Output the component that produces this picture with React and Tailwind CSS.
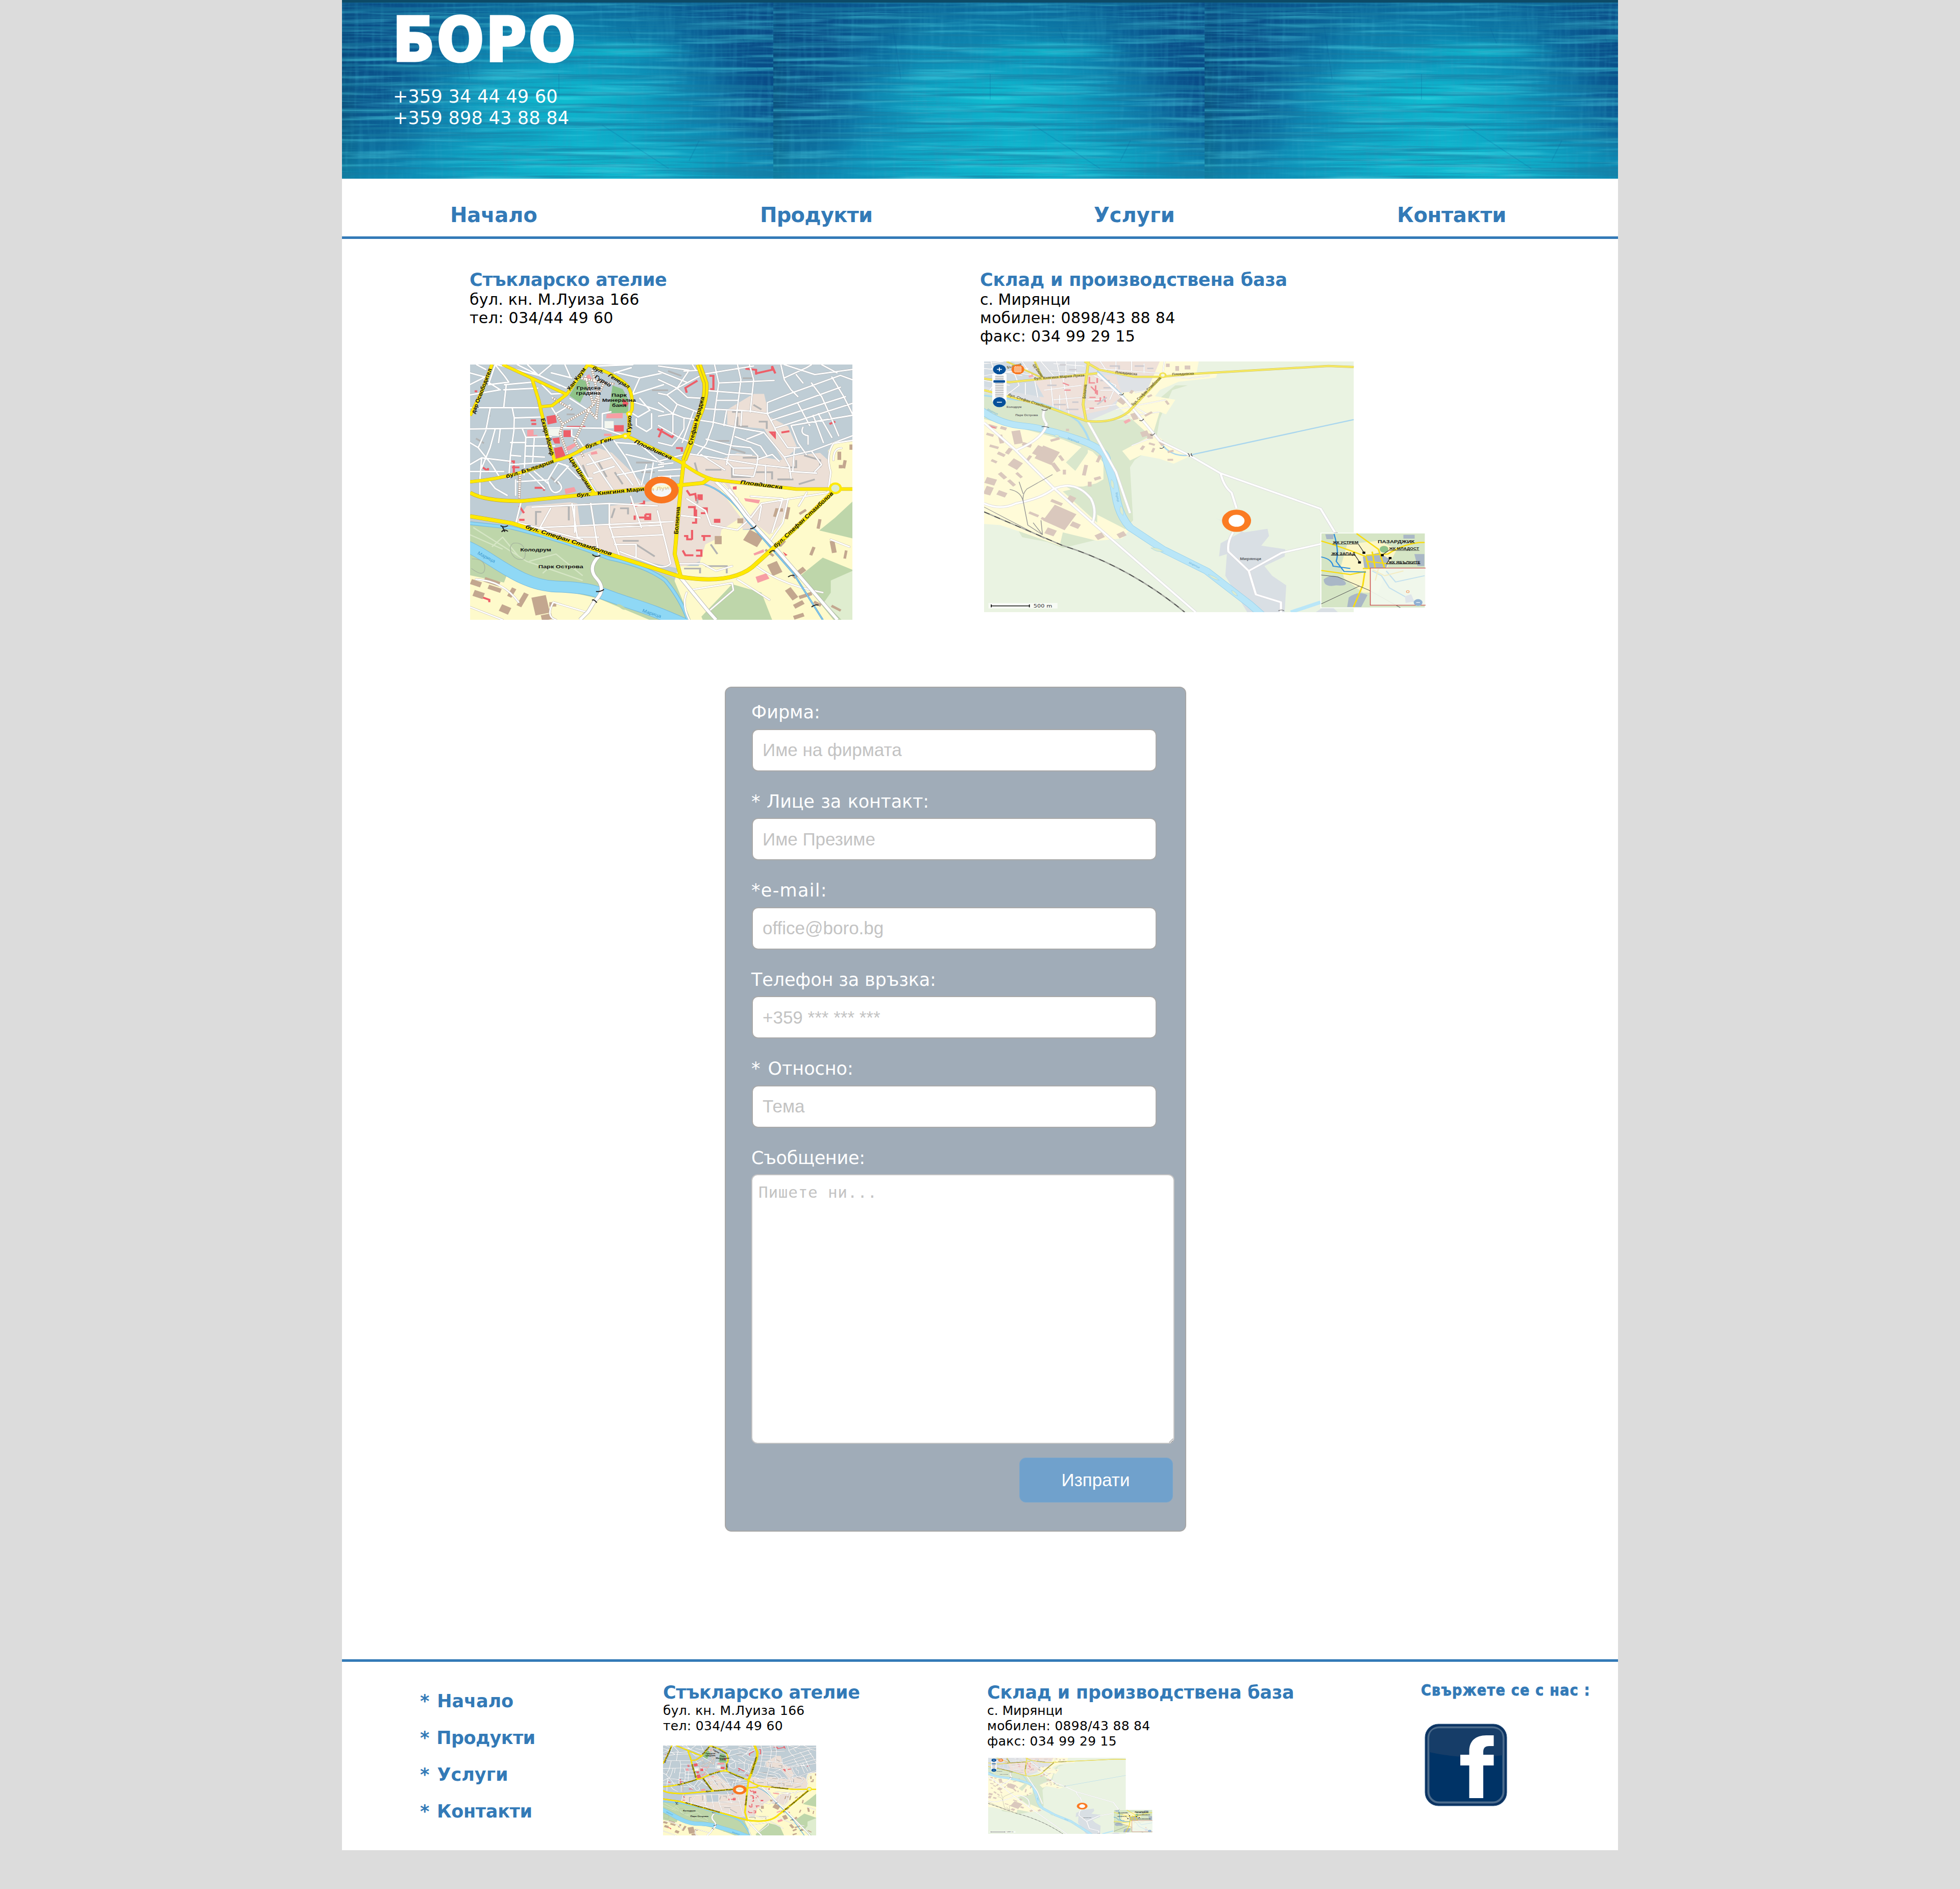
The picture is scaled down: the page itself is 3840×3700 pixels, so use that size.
import React from "react";

const NAV = ["Начало", "Продукти", "Услуги", "Контакти"];

/* One tile of the brushed fabric behind the header */
function FabricTile({ id }) {
  return (
    <svg className="block h-[345px] w-[845px] shrink-0" viewBox="0 0 845 345" preserveAspectRatio="none" aria-hidden="true">
      <defs>
        <linearGradient id={id + "x"} x1="0" x2="1" y1="0" y2="0">
          <stop offset="0" stopColor="#0b4a72" />
          <stop offset="0.05" stopColor="#0c5c90" />
          <stop offset="0.16" stopColor="#0d6ea2" />
          <stop offset="0.34" stopColor="#0f90b8" />
          <stop offset="0.55" stopColor="#0e9cc0" />
          <stop offset="0.78" stopColor="#0d80ae" />
          <stop offset="1" stopColor="#0b5390" />
        </linearGradient>
        <linearGradient id={id + "y"} x1="0" x2="0" y1="0" y2="1">
          <stop offset="0" stopColor="#0a4f88" stopOpacity="0.7" />
          <stop offset="0.3" stopColor="#0a6a9c" stopOpacity="0.25" />
          <stop offset="0.6" stopColor="#0fa8c6" stopOpacity="0.12" />
          <stop offset="1" stopColor="#0fb0cc" stopOpacity="0.5" />
        </linearGradient>
        <radialGradient id={id + "g"}>
          <stop offset="0" stopColor="#0fc8d6" stopOpacity="0.75" />
          <stop offset="1" stopColor="#0fc0d4" stopOpacity="0" />
        </radialGradient>
        <radialGradient id={id + "d"}>
          <stop offset="0" stopColor="#083f7c" stopOpacity="0.55" />
          <stop offset="1" stopColor="#083f7c" stopOpacity="0" />
        </radialGradient>
        <filter id={id + "k"} x="0" y="0" width="1" height="1">
          <feTurbulence type="fractalNoise" baseFrequency="0.0032 0.15" numOctaves="4" seed="7" />
          <feColorMatrix values="0 0 0 0 0.01  0 0 0 0 0.2  0 0 0 0 0.36  4.4 0 0 0 -1.95" />
        </filter>
        <filter id={id + "l"} x="0" y="0" width="1" height="1">
          <feTurbulence type="fractalNoise" baseFrequency="0.0045 0.12" numOctaves="4" seed="21" />
          <feColorMatrix values="0 0 0 0 0.09  0 0 0 0 0.74  0 0 0 0 0.84  0 3.2 0 0 -1.6" />
        </filter>
        <filter id={id + "w"} x="0" y="0" width="1" height="1">
          <feTurbulence type="fractalNoise" baseFrequency="0.12 0.012" numOctaves="2" seed="4" />
          <feColorMatrix values="0 0 0 0 0.03  0 0 0 0 0.35  0 0 0 0 0.55  2.4 0 0 0 -1.1" />
        </filter>
      </defs>
      <rect width="845" height="345" fill={`url(#${id}x)`} />
      <rect width="845" height="345" fill={`url(#${id}y)`} />
      <ellipse cx="90" cy="60" rx="220" ry="120" fill={`url(#${id}d)`} />
      <ellipse cx="70" cy="170" rx="120" ry="180" fill={`url(#${id}d)`} />
      <ellipse cx="800" cy="60" rx="190" ry="130" fill={`url(#${id}d)`} />
      <ellipse cx="830" cy="160" rx="110" ry="150" fill={`url(#${id}d)`} />
      <ellipse cx="530" cy="95" rx="170" ry="26" fill={`url(#${id}g)`} />
      <ellipse cx="440" cy="190" rx="280" ry="90" fill={`url(#${id}g)`} />
      <ellipse cx="500" cy="310" rx="380" ry="90" fill={`url(#${id}g)`} />
      <rect width="845" height="345" filter={`url(#${id}w)`} opacity="0.25" />
      <rect width="845" height="345" filter={`url(#${id}k)`} opacity="0.62" />
      <rect width="845" height="345" filter={`url(#${id}l)`} opacity="0.42" />
      <path d="M234 45 L250 150M560 50 L572 80M425 140 V190M510 240 L640 325M700 270 L680 310M785 70 L840 185" stroke="#0a5a94" strokeWidth="2" opacity="0.18" fill="none" />
    </svg>
  );
}

const STREETS_NW =
  "M0 130 L110 75 L130 30M40 12 L95 40M0 60 L90 85M85 100 L180 160 L0 190M150 12 L110 130 L230 115 L205 80 L150 12M205 130 L370 115M215 130 L200 265 L0 265M200 265 H410M200 160 L400 150M250 265 L262 325 L430 320M262 325 L260 400 L240 540 L230 680M0 390 L560 383 L780 386 L910 430M120 270 L95 400 L50 500 L0 470M50 500 L130 600M150 390 L120 500 L70 620M180 390 L170 470M310 390 L330 440 L480 435M330 440 L320 660M240 470 H330M240 545 L300 550M380 440 L370 590M330 490 H500M330 550 L440 555M405 75 L340 12M405 75 L480 12M405 75 L570 150M280 12 L530 135M160 12 L405 75M425 130 L480 185 L570 180M480 260 L505 300 L590 250M590 210 L690 275M560 12 L590 80M480 60 L600 90M740 20 L960 12M950 190 L1140 130M960 230 L1140 290M1000 210 L1060 280 L990 320 L960 300M980 330 V370 L1040 405 L1070 385 V300M780 390 V300 L830 290M850 60 L950 30M870 60 L1000 90 L1140 60M1000 90 L960 180M600 395 V430 L640 450 L680 510M0 600 L70 560 L240 580M70 560 L60 690M130 600 L180 680M0 640 H200M240 600 L470 585M280 700 L460 690 L520 590 L580 610 L500 700M560 600 L640 680 H720M460 700 Q480 780 520 760 T520 700M350 650 L440 740M380 640 L460 710M270 690 V780M60 690 V780M110 690 L150 740 L220 780M700 540 L850 760M780 480 L960 720M690 600 L830 560M730 650 L850 610M620 560 L740 760M850 460 L920 560 L1000 720M920 540 L1140 590M860 470 L1000 480 L1140 600M1040 600 L1010 720M1080 590 L1060 700M1140 610 L870 660";

const STREETS_NE =
  "M150 50 L240 45M0 20 L180 45 L110 150 L0 100M240 80 L110 150 L170 205 L265 210M0 50 L165 115M0 180 L50 190 L110 150M50 190 L110 245 L85 300 L0 315M110 245 L230 290M85 300 V410M0 235 L85 300 L150 325 L320 350 L450 380 L620 410M0 370 L120 440 L80 490 L0 470M150 330 V390 L120 440 L240 490M205 290 L140 470M330 12 L355 120 L320 370 L280 480 L230 540M465 12 L485 100 L450 380 L400 600M535 12 L560 100 L540 290M355 120 L680 105M290 165 L550 185M345 222 H470M250 270 L540 285 L640 300 L685 385M490 290 L485 370M400 285 L385 370M250 70 L560 20M200 12 L220 45M640 300 V235 L780 180 L1070 75 L1140 100M780 160 L740 100 L720 12M740 90 L870 30 L900 12M810 70 L850 120M780 160 L820 200M740 12 L920 70M920 70 L1140 40M960 12 L1050 60M640 300 L1070 145M660 340 L1100 200M685 385 L1140 240M780 370 L1140 310M820 240 L890 370M900 120 L960 200 L1010 310 L1060 430M1020 85 L1090 200 L1140 300M940 300 L1020 440M910 310 L970 470M900 520 L1140 430M780 370 L820 470 L870 540M620 410 L740 555 L900 520M850 380 Q830 420 880 430 V480M685 390 L760 500 H830M740 555 L770 610 L780 680M620 410 L520 450M450 435 L600 490 L640 550M450 380 L560 400M280 450 L440 490 L540 500 L585 550 L580 600M240 490 L400 540 L550 545M170 535 L400 570 L580 600 L770 620M580 570 L670 540 L710 580M250 540 L390 630M400 580 L440 620 V660 L560 670 L580 600M440 620 H560M630 605 V710M770 640 L930 650M800 500 L790 640M900 520 L960 600 L920 640M0 580 L150 540M0 600 L85 590M0 635 L150 625M0 670 L140 665M70 665 V700";

const STREETS_S =
  "M270 1020 L250 1110M310 1045 L600 1030 L780 1040M380 1050 L340 1130 L840 1105M470 1040 V1150M530 1030 L560 1240M600 1030 V1120 L640 1255M600 1130 L790 1120M610 1170 L800 1160M680 1000 L720 1130M780 1060 L830 1280 Q810 1300 780 1290 L640 1230M460 1030 L480 1170 H560M260 1110 L500 1180M620 1200 H700 V1255M890 1010 L960 1060 L980 1120 L1080 1140 L1130 1090M870 1080 L940 1090M1050 970 L1130 1090 L1170 1030 L1420 985M1130 1000 L1250 1010 L1210 1150M1170 1040 L1160 1100M1270 1010 L1250 1110 L1200 1190M1340 985 L1310 1040M860 1280 H950 L1000 1310 L1060 1290M900 1390 L1060 1360 L1065 1390 L970 1480M1080 1345 L1200 1430M1150 1290 Q1250 1370 1400 1400M1430 1180 L1500 1210M1420 980 L1430 900 Q1410 830 1440 780 L1511 768M1440 850 Q1440 800 1470 800M510 1480 L390 1440 Q360 1500 400 1513M78 1460 L200 1513M100 1345 Q200 1350 260 1440M890 1400 Q870 1450 900 1513M1000 930 L1080 1010";

const GREY_BUILDINGS =
  "M345 1065h-20v55M420 1040h28v60M620 1050l-12 40M640 1050h30v25M700 1200l70 50M650 1185h60M920 860l10 40M960 890h60M1060 880v40h70M1150 900h60v30M1230 880h70v-30M1330 830l60 20v30M1370 930l-60 20M1100 840h70M880 1300h60v20M960 1290h80v30M1230 930h60M1080 670v40h40M1160 690h30v30M500 870l30 80M560 860l30 60M620 900l30 50M150 640v30M250 720h40M100 760l30 20M260 900v40M380 920l30 30M700 860h60M720 900h50M930 1010v20M980 1200l25 40M760 560h60M820 480l50 20M1100 510h40M990 770h60M1050 800l60 20M440 660h30M1060 650h40M1140 620l30 20";

const BROWN_BLOCKS = [
  [80, 1350, 40, 22, 20], [130, 1345, 60, 20, 20], [90, 1395, 40, 26, 20], [145, 1375, 50, 18, 20], [190, 1455, 38, 30, 25],
  [315, 1415, 55, 75, -12], [375, 1440, 26, 18, 0], [265, 1400, 20, 60, 28], [225, 1380, 18, 40, 28], [345, 1490, 40, 24, -12],
  [1110, 1150, 60, 50, 30], [995, 1165, 26, 34, 0], [1200, 1275, 40, 50, -25], [1300, 1290, 20, 56, 50], [1225, 1050, 26, 14, 0],
  [1218, 1050, 12, 36, 15], [1262, 1045, 12, 50, 10], [1080, 1092, 22, 20, 0], [1310, 1060, 30, 10, -35], [1380, 1095, 12, 40, 10],
  [1455, 815, 14, 34, 0], [1475, 850, 12, 34, 10], [1460, 870, 14, 14, 0], [1500, 785, 12, 22, 0], [1270, 1380, 26, 50, -35],
  [1310, 1405, 50, 14, -20], [1290, 1440, 40, 18, -30], [1365, 1440, 30, 12, 30], [1430, 1460, 40, 10, 30], [1430, 1185, 18, 50, -10],
  [1355, 1210, 12, 36, 20], [1480, 1225, 10, 34, 10], [1240, 1180, 14, 30, 40], [1290, 1490, 40, 16, -20], [1180, 1230, 40, 10, 40],
];

const RED_MARKS =
  "M1110 470l40 5v20M1150 490l60-15v-15l12 30M890 570l-5-20 45-30M975 500h15v55h-12M780 720l55 35 10-15M800 715l-15 40M220 855h22v50h22M235 880h28M125 880l20 15v-12M305 685h20M308 700h18M320 965h35v12M680 1030l15 10 35-10v-12M695 1080v18M710 1088h45M735 1075v20h18v-20h-18M890 975l12 20 20-5 5 30M895 1045h25v40M925 1055v55h-15M945 1050h20v20h-22M880 1165h12v14h18M910 1140v40M875 1225l10 20h30M925 1225h20v22h-20M945 1165h35M955 1165v20M262 1040l18 30M262 1098h20M1425 700l22-10M1205 735l15 18v-18zM1245 735l30-5M120 1418l30 12v10M850 800l22 0v15";

const RIVER_TOWN = "M60 1205 C160 1250 260 1370 400 1375 S 560 1400 640 1430 S 760 1470 880 1530";
const RIVER_ARM = "M78 1112 L230 1130 Q420 1180 600 1258 Q740 1290 810 1350 Q870 1430 895 1513";
const RAIL_ROADS =
  "M1000 940 Q1060 1000 1110 1080 L1230 1225 L1455 1513M560 1250 Q515 1300 555 1345 Q590 1390 545 1435 L520 1480 L490 1513M865 1335 L965 1470 L1000 1513";
const PROMENADES =
  "M535 475 L560 590 L550 680M495 510 L620 535M510 500 L540 620 L520 640 L555 680M425 700 L520 640M400 660 L425 700 L415 740 L445 830M505 840 L470 770 L525 640M265 910 L262 1010M580 530 L540 620M385 590 L460 640";
const KARADZHA = "M935 453 L960 530 Q965 600 930 680 L905 780 L880 850";
const CANAL = "M950 948 Q1040 975 1120 1105 L1290 1320 L1400 1513";

function TownMap({ className }) {
  return (
    <svg className={className} viewBox="78 453 1433 1060" preserveAspectRatio="none" role="img" aria-label="Карта на ателието">
      <rect x="78" y="453" width="1433" height="1060" fill="#bfcdd5" />
      <path d="M245 1115 L290 1040 L455 1025 L480 1030 L490 1120 L600 1120 L600 1040 L760 1020 L870 990 L880 822 L1010 850 L1080 820 L1240 850 L1300 830 L1390 820 L1430 860 V985 L1250 1120 L1080 1140 L940 1270 L860 1300 L600 1240z" fill="#ecdfd6" />
      <path d="M1042 640 L1140 575 H1180 L1200 670 L1270 710 L1305 800 L1250 850 L1180 720 L1042 705zM462 840 L560 800 L610 820 L740 960 L560 985z" fill="#ecdfd6" />
      <path d="M1511 765 L1440 780 L1420 810 L1430 985 L1250 1010 L1205 1140 L1100 1140 L1090 1085 L1000 950 L1030 945 L1130 1080 L1090 1090 L1020 1140 L1015 1170 L960 1200 L935 1290 L860 1290 L840 1370 L880 1513 H1511z" fill="#fefacb" />
      <path d="M1050 950 L1420 980 L1250 1130 L1170 1150 L1080 1010z" fill="#fefacb" />
      <path d="M1160 1035 L1270 1010 L1240 1120 L1200 1160 L1120 1090z" fill="#ecdfd6" />
      <path d="M78 1112 L240 1125 L600 1250 L840 1340 L905 1513 H78z" fill="#bed6aa" />
      <path d="M78 1328 L205 1358 L215 1330 L400 1385 L560 1425 L750 1513 H78z" fill="#fefacb" />
      <path d="M1511 1022 L1445 1090 L1387 1142 L1511 1175zM1310 1335 L1400 1255 L1511 1305 V1513 H1440zM945 1500 L1060 1365 L1170 1400 L1210 1513 H950z" fill="#bed6aa" />
      <path d="M1511 1310 L1430 1350 V1400 L1405 1440 L1470 1513 H1511z" fill="#dfedcf" />
      <path d={RIVER_ARM} fill="none" stroke="#74b9dd" strokeWidth="15" />
      <path d={RIVER_ARM} fill="none" stroke="#8fd8f5" strokeWidth="10" />
      <path d={RIVER_TOWN} fill="none" stroke="#74b9dd" strokeWidth="48" />
      <path d={RIVER_TOWN} fill="none" stroke="#8fd8f5" strokeWidth="44" />
      <path d="M628 1450q10-8 36 18-12 12-36-18z" fill="#bed6aa" />
      <path d="M90 1130 L290 1270 L370 1300 L500 1350M160 1210 L200 1170 L260 1250M300 1270 L400 1240 L500 1330M370 1300 L350 1320M78 1160 L200 1220" fill="none" stroke="#d6e6c5" strokeWidth="5" />
      <path d="M240 1195q30-5 40 20t0 45q-30 10-45-20t5-45zM85 1260q50 0 48 40t-50 0" fill="none" stroke="#a9b8a0" strokeWidth="3" />

      {/* parks, squares and public buildings */}
      <path d="M450 582 L488 512 L528 530 L490 612zM612 540 L650 555 L672 600 L670 655 H597z" fill="#8fc389" />
      <path d="M364 668l34-6 5 32-34 8zM440 708h70v8h-70zM428 726h28v28h-28zM385 760l28-5 2 26h-20zM392 800l30-6 14 38-36 12zM618 705h36v26h-36zM650 592l22 22-8 14-14-10zM930 992h20v24h-20zM992 1094h24v16h-24zM1063 960l14-2v14h-14zM1250 1230l18 14-8 4zM95 560h10v8h-10z" fill="#ee5e68" />
      <path d="M505 505l20-12 10 20-24 8zM590 658l60-4v22h-62zM292 725l24-2v22h14v10h-38zM440 795l36-20 6 10-30 24-14 2zM432 970l36-8 8 18-40 12zM580 740h28v10h-28zM530 818l22-6 4 12-24 4zM1105 1008l60 8-5 14-50-10zM1140 1238l38-18 2 12-36 14zM1148 1335l40-15 12 22-44 18z" fill="#f79ea4" />
      <path d={RED_MARKS} fill="none" stroke="#ee5e68" strokeWidth="8" />
      <path d={GREY_BUILDINGS} fill="none" stroke="#b3b3b3" strokeWidth="7" />
      {BROWN_BLOCKS.map(([x, y, w, h, r], i) => (
        <rect key={i} x={x} y={y} width={w} height={h} fill="#c3a78f" transform={`rotate(${r} ${x + w / 2} ${y + h / 2})`} />
      ))}
      <path d="M372 712h50v38h-50zM582 688h34v30h-34z" fill="#f4f7ef" />

      {/* side streets */}
      <g fill="none" strokeLinecap="round" strokeLinejoin="round">
        <g transform="translate(76.5 445) scale(.6373 .7063)">
          <path d={STREETS_NW} stroke="#a9b0b5" strokeWidth="12" />
          <path d={STREETS_NW} stroke="#fff" strokeWidth="9" />
        </g>
        <g transform="translate(784 445) scale(.6373 .7063)">
          <path d={STREETS_NE} stroke="#aaa9ab" strokeWidth="11.5" />
          <path d={STREETS_NE} stroke="#fff" strokeWidth="8.5" />
        </g>
        <path d={STREETS_S} stroke="#b9b0aa" strokeWidth="8" />
        <path d={STREETS_S} stroke="#fff" strokeWidth="6" />
      </g>
      <path d={PROMENADES} fill="none" stroke="#a98d78" strokeWidth="9" />
      <path d={PROMENADES} fill="none" stroke="#fff" strokeWidth="7" strokeDasharray="6 3" />

      {/* canal and railway */}
      <path d={CANAL} fill="none" stroke="#5ea7d6" strokeWidth="7" />
      <path d={CANAL} fill="none" stroke="#8fd0f2" strokeWidth="3" />
      <path d={RAIL_ROADS} fill="none" stroke="#aaa" strokeWidth="15" />
      <path d={RAIL_ROADS} fill="none" stroke="#fff" strokeWidth="12" />

      {/* boulevards */}
      {["#b7a13a", "#ffe900"].map((color, i) => (
        <g key={color} fill="none" stroke={color} strokeLinejoin="round">
          <path strokeWidth={i ? 11 : 13} d="M160 453 L120 570 L78 665M200 453 L440 577 L520 453M310 512 L335 600 L345 650 L370 760 L395 852M343 628 L385 624 L440 577M520 455 Q640 500 670 545 Q690 580 685 640 L673 665 L675 740 L660 750M450 835 L545 990" />
          <path strokeWidth={i ? 12 : 14} d="M78 940 Q240 925 395 852 Q450 840 505 800 L600 760 L662 748 L780 810 L870 860 Q950 925 1000 932 L1300 970 H1511" />
          <path strokeWidth={i ? 14 : 16} d="M78 985 Q130 1020 270 1020 L540 990 L740 968 L950 945 L975 925" />
          <path strokeWidth={i ? 13 : 15} d="M880 845 L868 960 L845 1240 L868 1335" />
          <path strokeWidth={i ? 15 : 17} d="M78 1083 L235 1112 L600 1240 L868 1335 Q1070 1370 1150 1280 L1290 1140 L1445 975" />
        </g>
      ))}
      <path d={KARADZHA} fill="none" stroke="#b7a13a" strokeWidth="23" />
      <path d={KARADZHA} fill="none" stroke="#ffe900" strokeWidth="20" />
      <path d={KARADZHA} fill="none" stroke="#b7a13a" strokeWidth="2" />
      <circle cx="1447" cy="967" r="20" fill="#dcecd0" stroke="#ffe900" strokeWidth="9" />
      <circle cx="674" cy="658" r="8" fill="#fff6b0" stroke="#ffe900" strokeWidth="6" />
      <circle cx="660" cy="750" r="9" fill="#fff6b0" stroke="#ffe900" strokeWidth="7" />
      <path d="M192 1122q12 10 28 0M196 1148q10-14 24-2M536 1242q14 14 30 4M550 1395q14 4 30-8M535 1432q8-6 18 10M1128 1135q18-2 22-14M1200 1235q12-16 20-6M1270 1335q12-10 24-6M1358 1460q12-12 26-8M200 1128l8 20" fill="none" stroke="#222" strokeWidth="4" />

      {/* names */}
      <g fill="#111" fontFamily="'Liberation Sans', sans-serif" fontWeight="700" fontSize="22">
        <text transform="translate(96 658) rotate(-71)" textLength="196" lengthAdjust="spacingAndGlyphs" fontSize="22">дар Освободител</text>
        <text transform="translate(452 562) rotate(-56)" textLength="108" lengthAdjust="spacingAndGlyphs" fontSize="22">Хан Крум</text>
        <text transform="translate(535 472) rotate(26)" fontStyle="italic">бул.</text>
        <text transform="translate(594 502) rotate(34)" textLength="92" lengthAdjust="spacingAndGlyphs" fontStyle="italic">Генерал</text>
        <text transform="translate(543 508) rotate(34)" textLength="70" lengthAdjust="spacingAndGlyphs">Гурко</text>
        <text x="477" y="556" fontSize="18" textLength="90" lengthAdjust="spacingAndGlyphs">Градска</text>
        <text x="475" y="578" fontSize="18" textLength="93" lengthAdjust="spacingAndGlyphs">градина</text>
        <text x="608" y="586" fontSize="18" textLength="57" lengthAdjust="spacingAndGlyphs">Парк</text>
        <text x="573" y="608" fontSize="18" textLength="126" lengthAdjust="spacingAndGlyphs">Минерална</text>
        <text x="610" y="630" fontSize="18" textLength="54" lengthAdjust="spacingAndGlyphs">баня</text>
        <text transform="translate(680 735) rotate(-88)" textLength="70" lengthAdjust="spacingAndGlyphs">Гурко</text>
        <text transform="translate(343 678) rotate(77)" textLength="158" lengthAdjust="spacingAndGlyphs">Екзарх Йосиф</text>
        <text transform="translate(512 802) rotate(-19)" textLength="110" lengthAdjust="spacingAndGlyphs" fontStyle="italic">бул. Ген.</text>
        <text transform="translate(692 778) rotate(27)" textLength="156" lengthAdjust="spacingAndGlyphs" fontStyle="italic">Пловдивска</text>
        <text transform="translate(447 843) rotate(60)" textLength="158" lengthAdjust="spacingAndGlyphs">Цар Шишман</text>
        <text transform="translate(215 926) rotate(-20)" textLength="190" lengthAdjust="spacingAndGlyphs" fontStyle="italic">бул. България</text>
        <text transform="translate(478 1003) rotate(-5)" textLength="52" lengthAdjust="spacingAndGlyphs" fontStyle="italic">бул.</text>
        <text transform="translate(556 995) rotate(-6)" textLength="176" lengthAdjust="spacingAndGlyphs">Княгиня Мари</text>
        <text transform="translate(910 788) rotate(-77)" textLength="205" lengthAdjust="spacingAndGlyphs">Стефан Караджа</text>
        <text transform="translate(1090 948) rotate(8)" textLength="160" lengthAdjust="spacingAndGlyphs" fontStyle="italic">Пловдивска</text>
        <text transform="translate(857 1158) rotate(-86)" textLength="114" lengthAdjust="spacingAndGlyphs">Болнична</text>
        <text transform="translate(284 1132) rotate(19.5)" textLength="342" lengthAdjust="spacingAndGlyphs" fontStyle="italic">бул. Стефан Стамболов</text>
        <text transform="translate(1224 1215) rotate(-46)" textLength="312" lengthAdjust="spacingAndGlyphs" fontStyle="italic">бул. Стефан Стамболов</text>
        <text x="266" y="1229" fontSize="19" textLength="116" lengthAdjust="spacingAndGlyphs">Колодрум</text>
        <text x="334" y="1299" fontSize="19" textLength="168" lengthAdjust="spacingAndGlyphs">Парк Острова</text>
        <g fill="#3f9bd0" fontWeight="400" fontSize="20">
          <text transform="translate(104 1240) rotate(30)" textLength="74" lengthAdjust="spacingAndGlyphs">Марица</text>
          <text transform="translate(722 1480) rotate(20)" textLength="74" lengthAdjust="spacingAndGlyphs">Марица</text>
        </g>
      </g>
      <ellipse cx="795" cy="974" rx="38" ry="30" fill="#fff" fillOpacity="0.82" />
      <text transform="translate(738 981) rotate(-6)" fill="#a97c2f" opacity="0.35" fontFamily="'Liberation Sans', sans-serif" fontWeight="700" fontSize="22" textLength="114" lengthAdjust="spacingAndGlyphs">ия Луиза</text>
      <ellipse cx="795" cy="974" rx="51" ry="42" fill="none" stroke="#f97620" strokeWidth="27" />
    </svg>
  );
}

const OUTSKIRT_BLOCKS = [
  [170, 728, 28, 55, -10], [250, 800, 60, 60, 28], [160, 850, 36, 34, 35], [125, 745, 14, 36, -10], [240, 790, 20, 40, 30],
  [280, 1050, 80, 76, 30], [345, 1000, 24, 24, 30], [82, 925, 34, 26, 20], [80, 960, 24, 34, 20], [120, 980, 30, 20, 25],
  [275, 1135, 32, 26, 25], [435, 1155, 26, 22, -30], [505, 1150, 26, 20, -30], [355, 1110, 30, 20, 28], [395, 870, 12, 44, 10],
  [440, 830, 10, 30, 20], [430, 920, 22, 12, -20], [410, 940, 12, 20, 0], [300, 860, 14, 40, -30], [290, 760, 30, 10, -20],
  [120, 820, 26, 12, 30], [150, 800, 14, 26, 30], [95, 790, 30, 10, 20], [200, 780, 30, 14, 20], [130, 900, 14, 30, -40],
  [160, 930, 12, 30, -40], [508, 590, 26, 26, 40], [550, 655, 18, 28, -20], [590, 655, 28, 8, -35], [580, 730, 24, 22, -20],
  [600, 740, 18, 22, 0], [640, 770, 16, 20, -30], [665, 845, 18, 8, 0], [665, 810, 20, 8, -20], [605, 780, 20, 8, 20],
  [615, 800, 8, 18, 20], [580, 790, 10, 18, 30], [690, 460, 12, 20, 0], [720, 458, 18, 16, 0], [660, 450, 12, 14, 0],
  [545, 560, 10, 14, 30], [600, 580, 16, 8, -30], [655, 608, 18, 8, 60], [290, 1020, 40, 12, 28], [220, 1070, 34, 10, 28],
  [340, 720, 10, 10, 0], [90, 705, 30, 12, 20], [130, 712, 20, 12, 20], [260, 1090, 20, 10, 28], [330, 890, 10, 20, 0],
  [85, 740, 24, 10, 20], [100, 850, 20, 10, 30], [185, 900, 10, 26, -40], [215, 830, 10, 30, 30], [320, 830, 10, 24, -30],
];

const OUT_STREETS =
  "M78 470 L150 480 L240 500 M100 441 L120 520 L90 570M160 441 L190 540 L150 580M78 500 L220 470M240 520 L250 590M210 530 V580M290 510 L300 640M330 505 L350 660M270 560 L390 540M300 600 L390 590M320 580 V640M200 441 L230 500M260 441 L300 500M300 450 L400 460M290 480 L400 490M340 441 V500M370 441 V500M310 441 L320 500M440 470 L640 490M450 441 L470 480M500 441 V480M550 441 V480M590 450 V490M430 500 L500 540 L480 600M450 560 H510M400 640 L500 620M630 520 L600 560 L560 570M520 600 L600 660M640 500 L740 510 L800 500M655 441 L650 490M500 640 L660 600M530 670 L640 650M550 790 L620 755M410 600 H470M78 450 L140 441M100 470 L200 500M78 520 L160 540";

const MARITSA = "M70 645 Q130 700 200 708 T370 760 T470 850 Q490 920 500 1000 T545 1130 L650 1220 L790 1310 L880 1400 L930 1450 L965 1490";

function VillageMap({ className }) {
  return (
    <svg className={className} viewBox="78 441 1413 1040" preserveAspectRatio="none" role="img" aria-label="Карта на базата">
      <rect x="78" y="441" width="1183" height="1040" fill="#eaf3e2" />
      <path d="M78 560 L260 620 L410 690 L560 680 L690 540 L730 540 L680 560 L640 680 L625 790 L560 850 L545 880 L555 1100 L520 1150 L440 1180 L330 1215 L280 1190 L200 1170 L78 900z" fill="#d9e7cc" />
      <path d="M78 441 H500 L640 500 L570 600 L410 690 L270 630 L78 570z" fill="#dfe2e6" />
      <path d="M400 441 H640 V500 L560 500 L450 480zM240 510 L400 500 L395 670 L260 610zM410 495 L500 500 L520 580 L470 640 L400 660z" fill="#efe1da" />
      <path d="M78 441 H170 L240 520 L270 590 L78 545z" fill="#d3dce3" />
      <path d="M640 441 H765 L758 487 L825 490 L820 508 L700 525 L640 560 L625 585 L690 600 L660 660 L640 650 L620 735 L680 800 L740 832 L685 865 L640 845 L580 830 L545 852 L520 812 L610 750 L500 620 L520 570 L600 560z" fill="#fffbd8" />
      <path d="M78 680 L230 730 L330 765 L425 815 L460 860 V930 L420 960 L340 960 L420 1020 L430 1070 L520 1130 L540 1145 L520 1175 L440 1185 L330 1150 L320 1205 L200 1150 L130 1120 L78 1115z" fill="#fffbd8" />
      <path d="M410 770 L340 860 L370 895 L410 820zM330 980 L460 940 L510 1060 L440 1040 L440 1110z" fill="#d9e7cc" />
      <path d="M820 1090 L910 1150 L985 1135 L990 1165 L965 1205 L1042 1220 L1040 1250 L975 1290 L1000 1330 L1045 1370 L1040 1481 H920 L850 1330 L855 1240 L830 1250 L835 1195 L900 1150z" fill="#d9dfe4" />
      <path d="M1140 1481 L1180 1445 L1210 1481z" fill="#d9dfe4" />

      <g fill="none" strokeLinejoin="round">
        <path d={OUT_STREETS} stroke="#cfcfd2" strokeWidth="4.5" />
        <path d={OUT_STREETS} stroke="#fff" strokeWidth="3" />
        <path d="M78 582 L240 610 Q330 640 380 690 Q410 740 418 785" stroke="#a9dcf3" strokeWidth="7" />
        <path d={MARITSA} stroke="#93cfec" strokeWidth="27" />
        <path d={MARITSA} stroke="#b9e6f8" strokeWidth="24" />
        <path d="M1060 1481 L1155 1440" stroke="#b9e6f8" strokeWidth="14" />
        <path d="M440 480 L520 580 L640 770 Q670 840 735 830 L1261 682" stroke="#a9d6ee" strokeWidth="5" />
        <path d="M150 441 L265 510M240 441 L265 510" stroke="#e7da5c" strokeWidth="7" />
      </g>
      <path d="M485 930q12 12 8 40-14-10-8-40zM515 1040q12 14 8 40-16-14-8-40zM612 1215q20-6 40 14-20 6-40-14zM795 1325q20 4 36 24-24-4-36-24zM870 1390q14 6 20 24-18-4-20-24zM302 748q10-8 18 4-10 8-18-4z" fill="#dcebd0" stroke="#93cfec" />
      {OUTSKIRT_BLOCKS.map(([x, y, w, h, r], i) => (
        <rect key={i} x={x} y={y} width={w} height={h} fill="#dac8bd" transform={`rotate(${r} ${x + w / 2} ${y + h / 2})`} />
      ))}
      <path d="M415 505v25h18M440 510v20M420 545l15 20M435 540v35M415 590h20M440 560v20M415 635h15M450 590v18M330 530l20 10M335 560h20M85 705l30 12M432 605h20M462 585l4 25" fill="none" stroke="#f08f97" strokeWidth="5" />
      <path d="M524 690l18-12 6 10-18 12zM220 500l14-6 2 10-14 4z" fill="#f5aeb2" />
      <path d="M450 520h30M460 550h30M300 620h40M340 640h40M440 620l30-30M480 460h30v14M560 460h30M600 470h20M320 455h20M350 475h24M280 540h30M360 610h20" fill="none" stroke="#cdcbd0" strokeWidth="6" />

      <g fill="none" strokeLinejoin="round">
        {["#d8d6dc", "#fff"].map((c, i) => (
          <path key={c} stroke={c} strokeWidth={i ? 7 : 10} d="M410 690 L500 900 L545 1070M440 490 L530 600 L640 770 L735 830 L835 905 L1155 1052 L1210 1170M835 905 Q845 960 870 985 L886 1050M875 1150 Q855 1190 860 1230 L925 1310 L948 1408 L1028 1440 V1481M925 1310 L1030 1235 L1156 1198M78 695 L180 810 L300 965 L425 1110 L755 1481M78 1030 Q130 1060 180 1030 Q260 1010 300 970 Q370 930 420 1010 Q440 1060 425 1110M272 640 Q260 670 278 700 Q270 760 180 810" />
        ))}
        <path d="M297 910 L215 970 Q200 990 203 1020 L218 1120 L265 1160M160 972 Q195 980 203 1020M190 940L203 990M78 1045 L270 1175M235 1110L265 1160M260 1100L265 1160" stroke="#9a9a98" strokeWidth="2.5" />
        <path d="M78 1065 L330 1205 Q540 1290 720 1481" stroke="#a3a69f" strokeWidth="5" />
        <path d="M78 1065 L330 1205 Q540 1290 720 1481" stroke="#4b4b4b" strokeWidth="3" strokeDasharray="20 18" />
        {["#c9bd62", "#f6e95f"].map((c, i) => (
          <path key={c} stroke={c} strokeWidth={i ? 7 : 9} d="M78 512 L160 527 L440 490M400 441 L445 475 L560 505 H640 L750 492 L1180 460 L1261 464M412 441 L400 560 L395 620 L405 690M78 560 L270 625 L405 688 Q490 700 540 650 L645 505" />
        ))}
        <path d="M511 578q10 6 14-6M575 685q8 6 14-6M610 745q8 6 14-6M640 800q8 6 14-6M730 822q8 10 4 14M742 822q-4 8 4 12M262 640q10 8 20 0M262 712q12-4 24 4M1020 1475q10-6 18 0M1198 1152h12" stroke="#555" strokeWidth="2.5" />
      </g>
      <circle cx="650" cy="498" r="9" fill="#f4f6df" stroke="#f2e352" strokeWidth="6" />

      <g fill="#6b6437" fontFamily="'Liberation Sans', sans-serif" fontWeight="700" fontSize="15">
        <text transform="translate(238 517) rotate(-5)" textLength="162" lengthAdjust="spacingAndGlyphs">бул. Княгиня Мария Луиза</text>
        <text transform="translate(498 490) rotate(7)" textLength="70" lengthAdjust="spacingAndGlyphs">Пловдивска</text>
        <text transform="translate(680 499) rotate(-3)" textLength="70" lengthAdjust="spacingAndGlyphs">Пловдивска</text>
        <text transform="translate(154 582) rotate(23)" textLength="148" lengthAdjust="spacingAndGlyphs">бул. Стефан Стамболов</text>
        <text transform="translate(556 625) rotate(-52)" textLength="146" lengthAdjust="spacingAndGlyphs">бул. Стефан Стамболов</text>
        <text transform="translate(403 595) rotate(-86)" textLength="58" lengthAdjust="spacingAndGlyphs">Болнична</text>
        <text transform="translate(233 455) rotate(62)" textLength="60" lengthAdjust="spacingAndGlyphs">Цар Шишман</text>
        <text transform="translate(153 471) rotate(-18)" textLength="48" lengthAdjust="spacingAndGlyphs">България</text>
        <g fill="#666" fontSize="12">
          <text x="150" y="633" textLength="48" lengthAdjust="spacingAndGlyphs">Колодрум</text>
          <text x="178" y="668" textLength="72" lengthAdjust="spacingAndGlyphs">Парк Острова</text>
          <text x="897" y="1265" fontSize="17" fill="#5d6268" textLength="68" lengthAdjust="spacingAndGlyphs">Мирянци</text>
        </g>
        <g fill="#74b7dc" fontSize="11" fontWeight="400">
          <text transform="translate(344 762) rotate(25)">Марица</text>
          <text transform="translate(498 985) rotate(80)">Марица</text>
          <text transform="translate(732 1278) rotate(32)">Марица</text>
          <text transform="translate(86 642) rotate(32)">Марица</text>
        </g>
      </g>

      {/* zoom control */}
      <rect x="104" y="490" width="46" height="120" rx="6" fill="#fff" />
      <path d="M127 500v90" stroke="#cacaca" strokeWidth="27" strokeDasharray="7 2.5" />
      <rect x="108" y="519" width="37" height="10" rx="3" fill="#05509a" />
      <circle cx="127" cy="474" r="20.5" fill="#05509a" />
      <circle cx="127" cy="610" r="20.5" fill="#05509a" />
      <path d="M119 474h16M127 466v16M119 610h16" stroke="#fff" strokeWidth="3" />
      <circle cx="186" cy="474" r="20.5" fill="#f9771f" />
      <rect x="175" y="462" width="22" height="23" rx="3" fill="#fbb583" stroke="#fff" strokeWidth="1.5" strokeDasharray="3 2" />

      <ellipse cx="886" cy="1102" rx="36" ry="35.5" fill="#fff" stroke="#fb7b23" strokeWidth="21" />

      {/* scale */}
      <rect x="92" y="1443" width="221" height="23" fill="#f8fbf5" />
      <path d="M101 1455h122M101 1449v12M223 1449v12" stroke="#111" strokeWidth="3" />
      <text x="236" y="1462" fill="#333" fontFamily="'DejaVu Sans', sans-serif" fontSize="18" textLength="60" lengthAdjust="spacingAndGlyphs">500 m</text>

      {/* overview inset */}
      <g>
        <rect x="1156" y="1153" width="334" height="310" fill="#d5e5c5" stroke="#fff" strokeWidth="3" />
        <path d="M1240 1200 L1340 1185 L1400 1220 L1370 1290 L1340 1400 L1290 1400 L1230 1340 L1220 1290z" fill="#fbf6c8" />
        <path d="M1290 1250 L1340 1235 L1375 1260 L1365 1298 L1295 1300zM1165 1345q30-30 60 0t-20 25q-40 10-40-25zM1245 1420q30-30 60-10l-20 50h-45zM1455 1240h32v50h-22zM1420 1160h36v16h-36zM1170 1158h26v20h-22z" fill="#a9b7c6" />
        <circle cx="1358" cy="1220" r="14" fill="#8fc389" />
        <path d="M1157 1186 Q1220 1210 1300 1250 L1310 1300M1270 1155 L1340 1220 L1360 1300M1488 1192 Q1430 1190 1370 1240 L1300 1245M1157 1308 L1250 1325 L1300 1312M1297 1310 L1290 1370 L1260 1460M1300 1270 L1370 1280M1320 1230 L1330 1300M1290 1300 H1370" fill="none" stroke="#f8dc12" strokeWidth="5" />
        <path d="M1198 1157 Q1215 1230 1205 1270 L1230 1312 L1300 1315M1157 1252 Q1190 1260 1195 1290 L1250 1300" fill="none" stroke="#2d8fdd" strokeWidth="4" />
        <path d="M1157 1327 L1210 1335 L1310 1390 L1410 1462M1157 1447 L1280 1372" fill="none" stroke="#555" strokeWidth="2" />
        <rect x="1314" y="1298" width="176" height="154" fill="#f2f8ee" fillOpacity="0.92" />
        <path d="M1320 1310 L1350 1330 L1375 1380 L1430 1420 L1470 1450M1365 1310 L1395 1356 L1488 1330" fill="none" stroke="#c3e0ee" strokeWidth="4" />
        <path d="M1322 1305 L1360 1330 L1420 1310M1340 1300 L1330 1350" fill="none" stroke="#f3ecc4" strokeWidth="4" />
        <path d="M1425 1415l20-8 10 30-28 6z" fill="#dfe5ea" />
        <circle cx="1434" cy="1396" r="4.5" fill="none" stroke="#f6a06a" strokeWidth="2" />
        <path d="M1491 1298 H1314 V1452 H1491" fill="none" stroke="#cc4f4f" strokeWidth="2.5" />
        <circle cx="1467" cy="1441" r="14" fill="#8fb0d3" />
        <path d="M1461 1441h12" stroke="#fff" strokeWidth="2.5" />
        <path d="M1193 1199 H1276 L1293 1232M1188 1245 H1265 L1279 1272M1471 1225 H1373 L1353 1243M1474 1281 H1366 L1377 1258" fill="none" stroke="#222" strokeWidth="2" />
        <path d="M1289 1230h9v9h-9zM1275 1270h9v9h-9zM1348 1240h9v9h-9zM1373 1252h9v9h-9z" fill="#000" />
        <g fill="#151515" fontFamily="'Liberation Sans', sans-serif" fontWeight="700" fontSize="15">
          <text x="1194" y="1197" textLength="82" lengthAdjust="spacingAndGlyphs">ЖК УСТРЕМ</text>
          <text x="1190" y="1243" textLength="76" lengthAdjust="spacingAndGlyphs">ЖК ЗАПАД</text>
          <text x="1338" y="1196" fontSize="21" textLength="118" lengthAdjust="spacingAndGlyphs">ПАЗАРДЖИК</text>
          <text x="1374" y="1223" textLength="96" lengthAdjust="spacingAndGlyphs">ЖК МЛАДОСТ</text>
          <text x="1372" y="1279" textLength="102" lengthAdjust="spacingAndGlyphs">ЖК ЯБЪЛКИТЕ</text>
        </g>
      </g>
    </svg>
  );
}

function FacebookLogo() {
  return (
    <svg className="block size-[162px]" viewBox="0 0 162 162" role="img" aria-label="Facebook">
      <rect x="1" y="1" width="160" height="160" rx="26" fill="#0b3362" stroke="#315b85" strokeWidth="1" />
      <rect x="7.5" y="7.5" width="147" height="147" rx="21" fill="#003366" stroke="#4d6c8c" strokeWidth="4" />
      <path d="M9.5 28 Q9.5 9.5 28 9.5 H134 Q152.5 9.5 152.5 28 V62 Q80 72 9.5 56z" fill="#163d68" />
      <path d="M87.5 146 V82 H70 V61 H87.5 V54 C87.5 34 100 23 121 23 H135.5 V44 H127 C118 44 115 48 115 56 V61 H135.5 V82 H115 V146z" fill="#fff" />
    </svg>
  );
}

const FIELDS = [
  { label: "Фирма:", hint: "Име на фирмата", spacing: "tracking-[0px]" },
  { label: "* Лице за контакт:", hint: "Име Презиме", spacing: "tracking-[-0.2px] [word-spacing:1.8px]" },
  { label: "*e-mail:", hint: "office@boro.bg", spacing: "tracking-[1.3px]" },
  { label: "Телефон за връзка:", hint: "+359 *** *** ***", spacing: "tracking-[-0.12px]" },
  { label: "* Относно:", hint: "Тема", spacing: "tracking-[-0.05px] [word-spacing:4px]" },
];

function ContactForm() {
  return (
    <form className="ml-[750px] h-[1655px] w-[904px] rounded-[13px] border-2 border-[#a6a6a6] bg-[#a0acb8] pt-[27px] pl-[50px]">
      {FIELDS.map((f) => (
        <div key={f.label} className="mb-[38px] h-[136.6px]">
          <label className={`block text-[35px] leading-[42px] text-white ${f.spacing}`}>{f.label}</label>
          <input
            placeholder={f.hint}
            className="mt-[11.6px] ml-px block h-[83px] w-[793px] rounded-[12px] border-2 border-[#a9a9a9] bg-white px-[19px] font-['Liberation_Sans',Arial,sans-serif] text-[35px] placeholder:text-[#c3c3c3] placeholder:opacity-100"
          />
        </div>
      ))}
      <label className="block text-[35px] leading-[42px] tracking-[-0.3px] text-white">Съобщение:</label>
      <textarea
        placeholder="Пишете ни..."
        className="mt-[11px] block h-[528px] w-[829px] resize rounded-[12px] border-2 border-[#c4c4c4] bg-white px-[12px] pt-[15px] font-['DejaVu_Sans_Mono',monospace] text-[31px] leading-[36px] tracking-[0.75px] placeholder:text-[#c3c3c3] placeholder:opacity-100"
      />
      <button
        type="button"
        className="mt-[27px] ml-[525px] block h-[88px] w-[301px] rounded-[13px] border border-[#7ba6cc] bg-[#70a1cc] pr-[2px] font-['Liberation_Sans',Arial,sans-serif] text-[35px] text-white"
      >
        Изпрати
      </button>
    </form>
  );
}

const ATELIER = { title: "Стъкларско ателие", lines: ["бул. кн. М.Луиза 166", "тел: 034/44 49 60"] };
const DEPOT = { title: "Склад и производствена база", lines: ["с. Мирянци", "мобилен: 0898/43 88 84", "факс: 034 99 29 15"] };

export default function App() {
  return (
    <div className="flex h-[3700px] w-[3840px] justify-center bg-[#dcdcdc] font-['DejaVu_Sans',Verdana,sans-serif] text-black">
      <div className="flex h-[3624px] w-[2500px] flex-col bg-white">
        <header className="grid h-[350px] grid-cols-1 overflow-hidden border-t-[5px] border-[#0d4a66]">
          <div className="col-start-1 row-start-1 flex w-[2500px] overflow-hidden">
            <FabricTile id="a" />
            <FabricTile id="b" />
            <FabricTile id="c" />
          </div>
          <div className="z-10 col-start-1 row-start-1 pl-[100px] text-white">
            <h1 className="mt-[13px] h-[121px] w-max font-['DejaVu_Sans_Condensed','DejaVu_Sans',sans-serif] text-[119px] leading-[121px] font-bold tracking-[5px] [-webkit-text-stroke:5px_white]">
              БОРО
            </h1>
            <p className="mt-[29px] text-[35px] leading-[42px] tracking-[0.25px]">
              +359 34 44 49 60
              <br />
              +359 898 43 88 84
            </p>
          </div>
        </header>

        <nav className="flex h-[118px] shrink-0 border-b-[5px] border-[#337ab7] pt-[47px] pl-[212px] text-[40px] leading-[48px] font-bold text-[#337ab7]">
          <a className="w-[607px] tracking-[-0.2px]">{NAV[0]}</a>
          <a className="w-[654px] tracking-[-0.75px]">{NAV[1]}</a>
          <a className="w-[594px]">{NAV[2]}</a>
          <a className="tracking-[-0.3px]">{NAV[3]}</a>
        </nav>

        <section className="flex h-[877px] shrink-0 pt-[59px] pl-[250px]">
          <div className="w-[1000px]">
            <h2 className="h-[42px] text-[35px] leading-[42px] font-bold tracking-[-0.36px] text-[#337ab7]">{ATELIER.title}</h2>
            <div className="text-[30px] leading-[36px] tracking-[0.25px]">
              <p>{ATELIER.lines[0]}</p>
              <p className="tracking-[0.35px]">{ATELIER.lines[1]}</p>
            </div>
            <TownMap className="mt-[73px] ml-px block h-[500px] w-[749px]" />
          </div>
          <div>
            <h2 className="h-[42px] text-[35px] leading-[42px] font-bold tracking-[-0.2px] text-[#337ab7]">{DEPOT.title}</h2>
            <div className="text-[30px] leading-[36px] tracking-[0.3px]">
              <p className="tracking-normal">{DEPOT.lines[0]}</p>
              <p>{DEPOT.lines[1]}</p>
              <p>{DEPOT.lines[2]}</p>
            </div>
            <VillageMap className="mt-[31px] ml-[8px] block h-[491px] w-[865px]" />
          </div>
        </section>

        <ContactForm />

        <footer className="mt-[249.5px] flex h-[374.5px] shrink-0 border-t-[5px] border-[#337ab7]">
          <ul className="w-[629px] pt-[41px] pl-[153px] text-[35px] leading-[72px] font-bold text-[#337ab7] [word-spacing:3px]">
            <li className="tracking-[-0.1px]">* {NAV[0]}</li>
            <li className="tracking-[-0.6px]">* {NAV[1]}</li>
            <li>* {NAV[2]}</li>
            <li className="tracking-[-0.3px]">* {NAV[3]}</li>
          </ul>
          <div className="w-[635px] pt-[39px]">
            <h3 className="h-[42px] text-[35px] leading-[42px] font-bold tracking-[-0.42px] text-[#337ab7]">{ATELIER.title}</h3>
            <div className="text-[25px] leading-[30px] tracking-[0.22px]">
              <p>{ATELIER.lines[0]}</p>
              <p className="tracking-[0.3px]">{ATELIER.lines[1]}</p>
            </div>
            <TownMap className="mt-[23px] block h-[176px] w-[300px]" />
          </div>
          <div className="w-[850px] pt-[39px]">
            <h3 className="h-[42px] text-[35px] leading-[42px] font-bold tracking-[-0.22px] text-[#337ab7]">{DEPOT.title}</h3>
            <div className="text-[25px] leading-[30px] tracking-[0.28px]">
              <p className="tracking-normal">{DEPOT.lines[0]}</p>
              <p>{DEPOT.lines[1]}</p>
              <p>{DEPOT.lines[2]}</p>
            </div>
            <VillageMap className="mt-[17px] ml-[2px] block h-[149px] w-[322px]" />
          </div>
          <div className="pt-[37px]">
            <h3 className="font-['DejaVu_Sans_Condensed','DejaVu_Sans',sans-serif] text-[30px] leading-[38px] font-bold tracking-[1.3px] whitespace-nowrap text-[#337ab7] [-webkit-text-stroke:0.8px_#337ab7]">
              Свържете се с нас :
            </h3>
            <a className="mt-[46px] ml-[7px] block">
              <FacebookLogo />
            </a>
          </div>
        </footer>
      </div>
    </div>
  );
}
